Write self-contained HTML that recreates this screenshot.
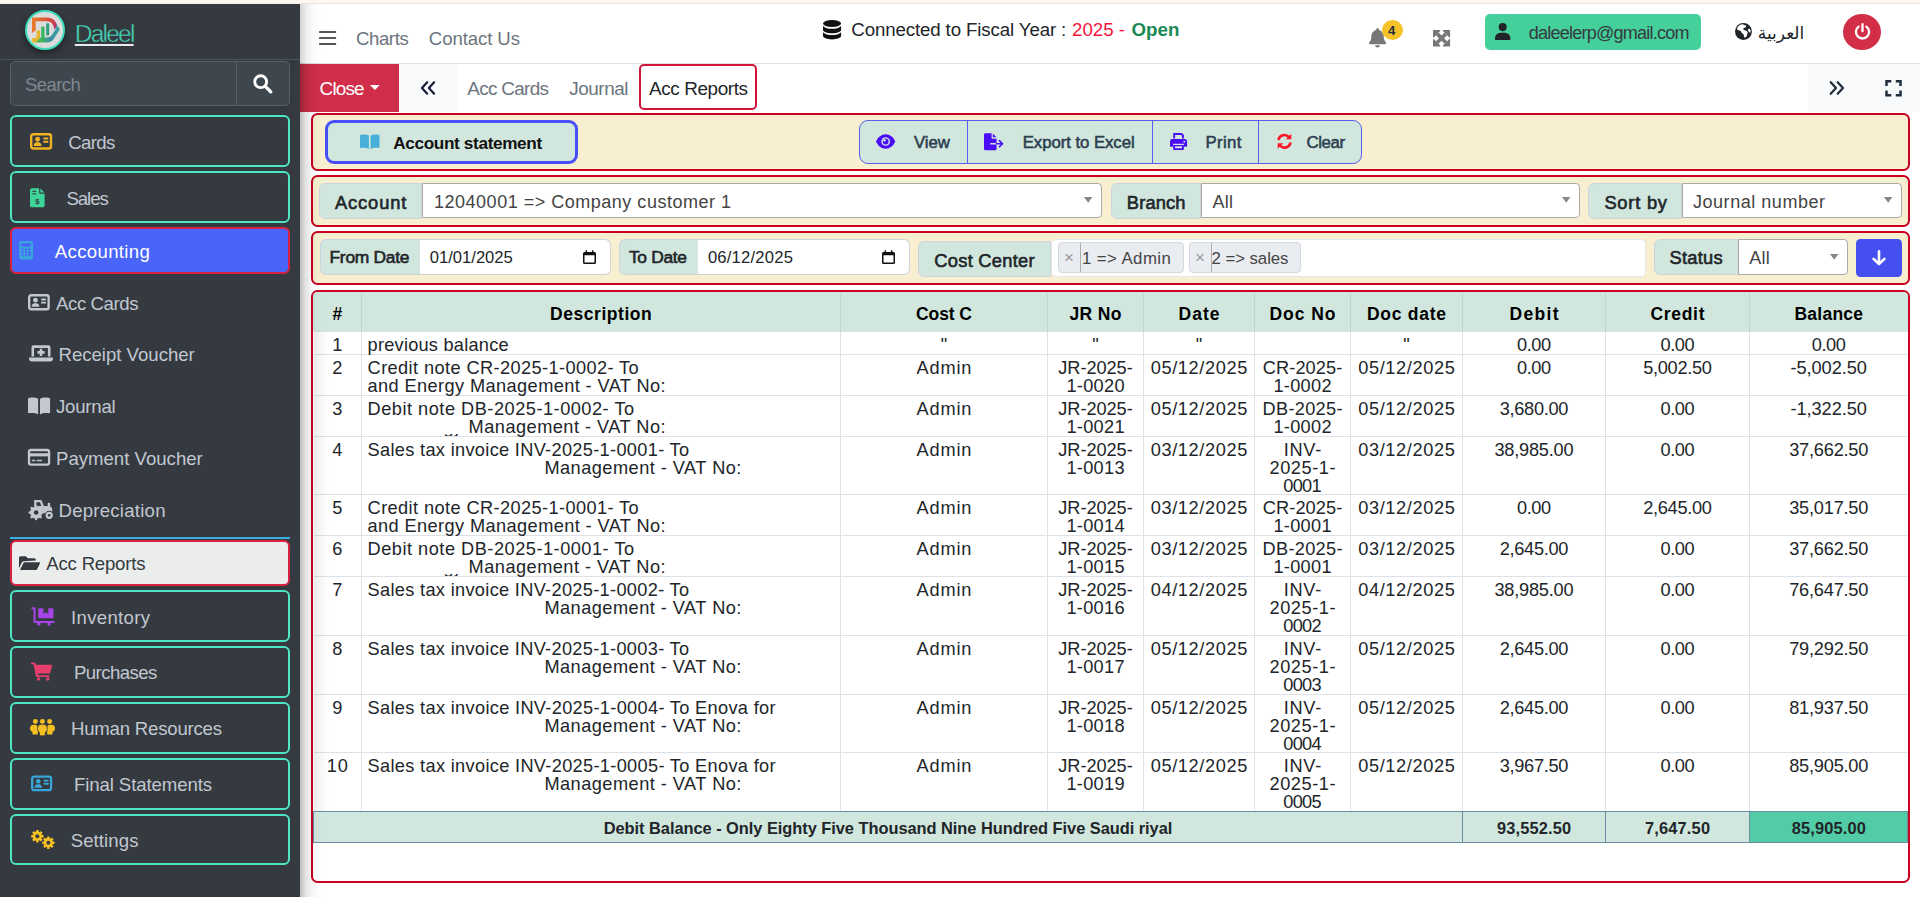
<!DOCTYPE html>
<html lang="en"><head><meta charset="utf-8"><title>Daleel - Acc Reports</title>
<style>
html,body{margin:0;padding:0}
body{width:1920px;height:897px;overflow:hidden;position:relative;background:#fff;font-family:'Liberation Sans','DejaVu Sans',sans-serif;}
.b{position:absolute;box-sizing:border-box}
.t{position:absolute;white-space:pre;line-height:1}
.i{position:absolute;display:block;overflow:visible}
</style></head>
<body>
<div class="b" style="left:0px;top:0px;width:1920px;height:4px;background:#fdf6f1"></div>
<div class="b" style="left:300px;top:3px;width:1620px;height:1px;background:#f3e3d5"></div>
<div class="b" style="left:0px;top:3px;width:300px;height:1px;background:#fbeee2"></div>
<aside>
<div class="b" style="left:0px;top:4px;width:300px;height:893px;background:#343a40"></div>
<div class="b" style="left:0px;top:59px;width:300px;height:1px;background:#4b545c"></div>
<div class="b" style="left:25px;top:10px;width:40px;height:40px;border-radius:50%;background:#dcdcdc;border:2px solid #3fdcbc;box-shadow:0 3px 7px rgba(0,0,0,.45);overflow:hidden"><svg width="40" height="40" viewBox="0 0 40 40" style="position:absolute;left:-2px;top:-2px"><defs><linearGradient id="lg1" gradientUnits="userSpaceOnUse" x1="8" y1="14" x2="32" y2="18"><stop offset="0" stop-color="#e8782c"/><stop offset=".5" stop-color="#dc5a36"/><stop offset=".85" stop-color="#d23a50"/><stop offset="1" stop-color="#8a3aa8"/></linearGradient><linearGradient id="lg2" gradientUnits="userSpaceOnUse" x1="34" y1="20" x2="12" y2="31"><stop offset="0" stop-color="#3aa0a0"/><stop offset=".5" stop-color="#3a8fa6"/><stop offset=".8" stop-color="#3db463"/><stop offset="1" stop-color="#58b84c"/></linearGradient></defs><path d="M7 7.400H22.500C27.500 7.400 31 11 32.300 15.500L29.400 19.700C28.600 14.500 26.500 11.200 22 11.200H10.700V20.200L7 23z" fill="url(#lg1)"/><path d="M31.500 14.800L35 19.300 29.800 27.200C28 30.400 26 32.400 22.500 32.400H10L15.500 27.500H22C24.500 27.500 26 26.500 27.200 24.500L30.500 19.500z" fill="url(#lg2)"/><path d="M7.200 28h4.400v-7.500H15V28l-5 4.400H7.200z" fill="#e6b52c"/><rect x="16.200" y="16.600" width="3.300" height="13" rx=".8" fill="#3db463"/><rect x="21.200" y="13.200" width="2.900" height="12.400" rx=".8" fill="#2f9e7e"/></svg></div>
<span class="t" style="left:74.8px;top:21.8px;font-size:24.6px;letter-spacing:-1.827px;color:#48d6b8;-webkit-text-stroke:.45px #343a40;text-decoration:underline;text-decoration-color:#e9ecef;text-decoration-thickness:2px;text-underline-offset:1.5px">Daleel</span>
<div class="b" style="left:10px;top:61px;width:280px;height:45px;background:#3f474e;border:1px solid #56606a;border-radius:5px"></div>
<div class="b" style="left:236px;top:61px;width:1px;height:45px;background:#56606a"></div>
<span class="t" style="left:25.0px;top:76.2px;font-size:18.4px;letter-spacing:-0.496px;color:#7f8890;">Search</span>
<svg class="i" style="left:253.3px;top:73.6px" width="19.8" height="19.8" viewBox="0 0 18 18" ><circle cx="7" cy="7" r="5.400" fill="none" stroke="#fff" stroke-width="2.600"/><path d="M11.200 11.200l5 5" stroke="#fff" stroke-width="3" stroke-linecap="round"/></svg>
<div class="b" style="left:10px;top:115px;width:280px;height:52px;border:2px solid #4de5c4;border-radius:6px"></div>
<span class="t" style="left:68.2px;top:133.8px;font-size:18.6px;letter-spacing:-0.602px;color:#c2c7d0;">Cards</span>
<svg class="i" style="left:30.4px;top:133.4px" width="22.2" height="16.8" viewBox="0 0 24 18" ><rect x="1.3" y="1.3" width="21.4" height="15.4" rx="2.2" fill="none" stroke="#f0b323" stroke-width="2.6"/><circle cx="8.2" cy="6.7" r="2.6" fill="#f0b323"/><path d="M3.900 14c0-2.500 1.600-4 3.300-4h2c1.700 0 3.300 1.500 3.300 4z" fill="#f0b323"/><rect x="14.400" y="4.900" width="5.400" height="2" rx=".4" fill="#f0b323"/><rect x="14.400" y="8.400" width="5.400" height="2" rx=".4" fill="#f0b323"/></svg>
<div class="b" style="left:10px;top:171px;width:280px;height:52px;border:2px solid #4de5c4;border-radius:6px"></div>
<span class="t" style="left:66.5px;top:189.8px;font-size:18.6px;letter-spacing:-1.079px;color:#c2c7d0;">Sales</span>
<svg class="i" style="left:30.4px;top:187.8px" width="14.6" height="19.5" viewBox="0 0 16 21" ><path d="M2 0h8v5a1 1 0 0 0 1 1h5v13a2 2 0 0 1-2 2H2a2 2 0 0 1-2-2V2a2 2 0 0 1 2-2z" fill="#3dd598"/><path d="M11.3 0.3L15.7 4.7H11.3z" fill="#3dd598"/><rect x="2.6" y="2.9" width="4.2" height="1.2" fill="#343a40"/><rect x="2.6" y="5.6" width="4.2" height="1.2" fill="#343a40"/><text x="8" y="17.2" font-size="8.5" font-weight="700" text-anchor="middle" fill="#343a40" font-family="Liberation Sans,sans-serif">$</text></svg>
<div class="b" style="left:10px;top:227px;width:280px;height:47px;background:#4864f9;border:2px solid #d8223f;border-radius:6px"></div>
<span class="t" style="left:54.8px;top:242.6px;font-size:18.6px;letter-spacing:0.333px;color:#fff;">Accounting</span>
<svg class="i" style="left:18.7px;top:241.4px" width="14.3" height="18.6" viewBox="0 0 14 19" ><rect x="0" y="0" width="14" height="19" rx="1.8" fill="#3aa7dc"/><rect x="2" y="2.3" width="10" height="3.4" rx=".5" fill="#4864f9"/><rect x="2.0" y="7.6" width="2.4" height="1.9" rx=".4" fill="#4864f9"/><rect x="5.6" y="7.6" width="2.4" height="1.9" rx=".4" fill="#4864f9"/><rect x="9.2" y="7.6" width="2.4" height="1.9" rx=".4" fill="#4864f9"/><rect x="2.0" y="10.6" width="2.4" height="1.9" rx=".4" fill="#4864f9"/><rect x="5.6" y="10.6" width="2.4" height="1.9" rx=".4" fill="#4864f9"/><rect x="9.2" y="10.6" width="2.4" height="4.9" rx=".4" fill="#4864f9"/><rect x="2.0" y="13.6" width="2.4" height="1.9" rx=".4" fill="#4864f9"/><rect x="5.6" y="13.6" width="2.4" height="1.9" rx=".4" fill="#4864f9"/></svg>
<span class="t" style="left:56.0px;top:294.8px;font-size:18.6px;letter-spacing:-0.408px;color:#c2c7d0;">Acc Cards</span>
<svg class="i" style="left:28.4px;top:294.4px" width="21.8" height="16.6" viewBox="0 0 24 18" ><rect x="1.3" y="1.3" width="21.4" height="15.4" rx="2.2" fill="none" stroke="#c2c7d0" stroke-width="2.6"/><circle cx="8.2" cy="6.7" r="2.6" fill="#c2c7d0"/><path d="M3.900 14c0-2.500 1.600-4 3.300-4h2c1.700 0 3.300 1.500 3.300 4z" fill="#c2c7d0"/><rect x="14.400" y="4.900" width="5.400" height="2" rx=".4" fill="#c2c7d0"/><rect x="14.400" y="8.400" width="5.400" height="2" rx=".4" fill="#c2c7d0"/></svg>
<span class="t" style="left:58.5px;top:345.8px;font-size:18.6px;letter-spacing:-0.011px;color:#c2c7d0;">Receipt Voucher</span>
<svg class="i" style="left:28.8px;top:345.4px" width="24.0" height="16.6" viewBox="0 0 24 16.500" ><path d="M4.300 .3h15.400a1.800 1.800 0 0 1 1.800 1.800V11.400h-2.600V2.900H5.100v8.500H2.500V2.100A1.800 1.800 0 0 1 4.300.3z" fill="#c2c7d0"/><path d="M.3 12.400h23.400a.3.300 0 0 1 .3.300v.8a3 3 0 0 1-3 3H3a3 3 0 0 1-3-3v-.8a.3.300 0 0 1 .3-.3z" fill="#c2c7d0"/><path d="M10.700 3.700h2.600v2.300h2.300v2.600h-2.300v2.300h-2.600V8.600H8.400V6h2.300z" fill="#c2c7d0"/></svg>
<span class="t" style="left:56.0px;top:397.6px;font-size:18.6px;letter-spacing:-0.214px;color:#c2c7d0;">Journal</span>
<svg class="i" style="left:28.4px;top:396.7px" width="22.1" height="17.6" viewBox="0 0 22.500 17.200" preserveAspectRatio="none"><path d="M1 .9C4 .1 7.600.3 10.300 1.700V17c-2.600-1.300-6-1.600-9.300-1.100-.5.100-1-.2-1-.8V1.900C0 1.400.4 1 1 .9z" fill="#c2c7d0"/><path d="M21.500.9C18.500.1 14.900.3 12.200 1.700V17c2.600-1.300 6-1.600 9.300-1.100.5.100 1-.2 1-.8V1.900c0-.5-.4-.9-1-1z" fill="#c2c7d0"/></svg>
<span class="t" style="left:56.0px;top:450.0px;font-size:18.6px;color:#c2c7d0;">Payment Voucher</span>
<svg class="i" style="left:28.4px;top:449.4px" width="22.1" height="16.6" viewBox="0 0 24 18" ><rect x="1.1" y="1.1" width="21.8" height="15.8" rx="2.2" fill="none" stroke="#c2c7d0" stroke-width="2.5"/><rect x="1" y="4.6" width="22" height="3.4" fill="#c2c7d0"/><rect x="4.2" y="11.6" width="3.6" height="1.8" rx=".4" fill="#c2c7d0"/><rect x="9.200" y="11.6" width="6" height="1.8" rx=".4" fill="#c2c7d0"/></svg>
<span class="t" style="left:58.5px;top:502.0px;font-size:18.6px;letter-spacing:0.237px;color:#c2c7d0;">Depreciation</span>
<svg class="i" style="left:28.1px;top:500.0px" width="25.6" height="19.7" viewBox="-1 0 25.5 20" ><path d="M5 0h6.500a1.500 1.500 0 0 1 1.400 1l1.900 5.200h4V3.600a.8.8 0 0 1 .8-.8h.9a.8.8 0 0 1 .8.8v2.900c1.200.4 2 1.500 2 2.800v4.200h-9V12H9V6.500H5z" fill="#c2c7d0"/><path d="M7.300 2.300h3.600l1.400 3.900h-5z" fill="#343a40"/><circle cx="7" cy="12.800" r="6.200" fill="#c2c7d0"/><circle cx="7" cy="12.800" r="2.300" fill="#343a40"/><circle cx="20.300" cy="15.600" r="4.600" fill="#343a40"/><circle cx="20.300" cy="15.600" r="3.700" fill="#c2c7d0"/><circle cx="20.300" cy="15.600" r="1.300" fill="#343a40"/><circle cx="13.50" cy="12.80" r="1.25" fill="#c2c7d0"/><circle cx="11.60" cy="17.40" r="1.25" fill="#c2c7d0"/><circle cx="7.00" cy="19.30" r="1.25" fill="#c2c7d0"/><circle cx="2.40" cy="17.40" r="1.25" fill="#c2c7d0"/><circle cx="0.50" cy="12.80" r="1.25" fill="#c2c7d0"/><circle cx="2.40" cy="8.20" r="1.25" fill="#c2c7d0"/><circle cx="7.00" cy="6.30" r="1.25" fill="#c2c7d0"/><circle cx="11.60" cy="8.20" r="1.25" fill="#c2c7d0"/></svg>
<div class="b" style="left:10px;top:537px;width:280px;height:2px;background:#3aaee0"></div>
<div class="b" style="left:10px;top:539.5px;width:280px;height:46px;background:#ebeded;border:2px solid #d8223f;border-radius:6px"></div>
<span class="t" style="left:46.3px;top:554.8px;font-size:18.6px;letter-spacing:-0.208px;color:#343a40;">Acc Reports</span>
<svg class="i" style="left:18.7px;top:554.8px" width="21.3" height="16.2" viewBox="0 0 24 16" ><path d="M19 5.200V4.300a1.800 1.800 0 0 0-1.800-1.800H10L7.700.2H1.800A1.800 1.800 0 0 0 0 2v11.800l3.300-6.700c.4-.8 1.200-1.300 2.100-1.300z" fill="#343a40"/><path d="M5.400 7.100h17.400c.7 0 1.200.8.800 1.400l-3.200 6.300a2 2 0 0 1-1.800 1.100H1.100z" fill="#343a40"/></svg>
<div class="b" style="left:10px;top:590px;width:280px;height:52px;border:2px solid #4de5c4;border-radius:6px"></div>
<span class="t" style="left:71.0px;top:608.8px;font-size:18.6px;letter-spacing:0.314px;color:#c2c7d0;">Inventory</span>
<svg class="i" style="left:31.0px;top:607.0px" width="23.8" height="19.0" viewBox="0 0 24 19.500" ><path d="M1.100 1.300H3.400V15.300H23" fill="none" stroke="#a643e8" stroke-width="2.100" stroke-linecap="round" stroke-linejoin="round"/><path d="M8.200 1.200h4.300v5.600l2.500-1.500 2.500 1.500V1.200h4.300a1 1 0 0 1 1 1v8.400a1 1 0 0 1-1 1H8.200a1 1 0 0 1-1-1V2.200a1 1 0 0 1 1-1z" fill="#a643e8"/><circle cx="7.700" cy="17.500" r="1.750" fill="#a643e8"/><circle cx="18.300" cy="17.500" r="1.750" fill="#a643e8"/></svg>
<div class="b" style="left:10px;top:646px;width:280px;height:52px;border:2px solid #4de5c4;border-radius:6px"></div>
<span class="t" style="left:74.0px;top:663.8px;font-size:18.6px;letter-spacing:-0.582px;color:#c2c7d0;">Purchases</span>
<svg class="i" style="left:31.0px;top:662.0px" width="21.2" height="19.3" viewBox="0 0 22.5 19.700" ><path d="M0 .2h3.700a1 1 0 0 1 1 .8l.3 1.600h16.400c.6 0 1.100.6.900 1.200l-1.800 7.300a1 1 0 0 1-.9.700H7.300l.4 2h11a.9.9 0 0 1 0 1.800H6.200a1 1 0 0 1-1-.8L2.600 2H0z" fill="#e83e6c"/><circle cx="8" cy="17.700" r="1.800" fill="#e83e6c"/><circle cx="17.800" cy="17.700" r="1.800" fill="#e83e6c"/></svg>
<div class="b" style="left:10px;top:702px;width:280px;height:52px;border:2px solid #4de5c4;border-radius:6px"></div>
<span class="t" style="left:71.0px;top:719.8px;font-size:18.6px;letter-spacing:-0.213px;color:#c2c7d0;">Human Resources</span>
<svg class="i" style="left:30.0px;top:719.4px" width="25.2" height="17.1" viewBox="0 0 25 17" ><circle cx="5.3" cy="2.4" r="2.45" fill="#f5c021"/><circle cx="12.3" cy="2.4" r="2.45" fill="#f5c021"/><circle cx="19.5" cy="2.4" r="2.45" fill="#f5c021"/><rect x="0" y="5.600" width="8" height="7.200" rx="3.500" fill="#f5c021"/><rect x="2.400" y="9.500" width="5.400" height="5.900" rx=".9" fill="#f5c021"/><rect x="16.800" y="5.600" width="8" height="7.200" rx="3.500" fill="#f5c021"/><rect x="17" y="9.500" width="5.400" height="5.900" rx=".9" fill="#f5c021"/><path d="M11.300 5.200h2c2.300 0 3.900 1.700 3.900 4.100 0 2-.8 3.400-2 4.100v2.300a1 1 0 0 1-1 1H10.400a1 1 0 0 1-1-1v-2.300c-1.200-.7-2-2.100-2-4.100 0-2.400 1.600-4.100 3.900-4.100z" fill="#f5c021" stroke="#343a40" stroke-width=".8"/></svg>
<div class="b" style="left:10px;top:758px;width:280px;height:52px;border:2px solid #4de5c4;border-radius:6px"></div>
<span class="t" style="left:74.0px;top:775.8px;font-size:18.6px;letter-spacing:-0.102px;color:#c2c7d0;">Final Statements</span>
<svg class="i" style="left:31.0px;top:775.4px" width="21.2" height="16.8" viewBox="0 0 24 18" ><rect x="1.3" y="1.3" width="21.4" height="15.4" rx="2.2" fill="none" stroke="#3aa5d8" stroke-width="2.6"/><circle cx="8.2" cy="6.7" r="2.6" fill="#3aa5d8"/><path d="M3.900 14c0-2.500 1.600-4 3.300-4h2c1.700 0 3.300 1.500 3.300 4z" fill="#3aa5d8"/><rect x="14.400" y="4.900" width="5.400" height="2" rx=".4" fill="#3aa5d8"/><rect x="14.400" y="8.400" width="5.400" height="2" rx=".4" fill="#3aa5d8"/></svg>
<div class="b" style="left:10px;top:813.5px;width:280px;height:51.5px;border:2px solid #4de5c4;border-radius:6px"></div>
<span class="t" style="left:70.7px;top:831.6px;font-size:18.6px;letter-spacing:0.087px;color:#c2c7d0;">Settings</span>
<svg class="i" style="left:30.6px;top:830.3px" width="24.1" height="19.0" viewBox="0 0 24 19" ><rect x="-1.27" y="-6.20" width="2.54" height="2.82" rx="0.38" fill="#f5c021" transform="translate(6.3,6.3) rotate(0)"/><rect x="-1.27" y="-6.20" width="2.54" height="2.82" rx="0.38" fill="#f5c021" transform="translate(6.3,6.3) rotate(45)"/><rect x="-1.27" y="-6.20" width="2.54" height="2.82" rx="0.38" fill="#f5c021" transform="translate(6.3,6.3) rotate(90)"/><rect x="-1.27" y="-6.20" width="2.54" height="2.82" rx="0.38" fill="#f5c021" transform="translate(6.3,6.3) rotate(135)"/><rect x="-1.27" y="-6.20" width="2.54" height="2.82" rx="0.38" fill="#f5c021" transform="translate(6.3,6.3) rotate(180)"/><rect x="-1.27" y="-6.20" width="2.54" height="2.82" rx="0.38" fill="#f5c021" transform="translate(6.3,6.3) rotate(225)"/><rect x="-1.27" y="-6.20" width="2.54" height="2.82" rx="0.38" fill="#f5c021" transform="translate(6.3,6.3) rotate(270)"/><rect x="-1.27" y="-6.20" width="2.54" height="2.82" rx="0.38" fill="#f5c021" transform="translate(6.3,6.3) rotate(315)"/><circle cx="6.3" cy="6.3" r="4.7" fill="#f5c021"/><circle cx="6.3" cy="6.3" r="1.97" fill="#343a40"/><rect x="-1.27" y="-6.20" width="2.54" height="2.82" rx="0.38" fill="#f5c021" transform="translate(17.3,12.8) rotate(0)"/><rect x="-1.27" y="-6.20" width="2.54" height="2.82" rx="0.38" fill="#f5c021" transform="translate(17.3,12.8) rotate(45)"/><rect x="-1.27" y="-6.20" width="2.54" height="2.82" rx="0.38" fill="#f5c021" transform="translate(17.3,12.8) rotate(90)"/><rect x="-1.27" y="-6.20" width="2.54" height="2.82" rx="0.38" fill="#f5c021" transform="translate(17.3,12.8) rotate(135)"/><rect x="-1.27" y="-6.20" width="2.54" height="2.82" rx="0.38" fill="#f5c021" transform="translate(17.3,12.8) rotate(180)"/><rect x="-1.27" y="-6.20" width="2.54" height="2.82" rx="0.38" fill="#f5c021" transform="translate(17.3,12.8) rotate(225)"/><rect x="-1.27" y="-6.20" width="2.54" height="2.82" rx="0.38" fill="#f5c021" transform="translate(17.3,12.8) rotate(270)"/><rect x="-1.27" y="-6.20" width="2.54" height="2.82" rx="0.38" fill="#f5c021" transform="translate(17.3,12.8) rotate(315)"/><circle cx="17.3" cy="12.8" r="4.7" fill="#f5c021"/><circle cx="17.3" cy="12.8" r="1.97" fill="#343a40"/></svg>
</aside>
<header>
<div class="b" style="left:300px;top:4px;width:1620px;height:59px;background:#fff"></div>
<div class="b" style="left:300px;top:63px;width:1620px;height:1px;background:#dee2e6"></div>
<svg class="i" style="left:319.0px;top:31.0px" width="17.2" height="14.0" viewBox="0 0 16 13.4" preserveAspectRatio="none"><rect x="0" y="0" width="16" height="2" rx=".8" fill="#555"/><rect x="0" y="5.7" width="16" height="2" rx=".8" fill="#555"/><rect x="0" y="11.4" width="16" height="2" rx=".8" fill="#555"/></svg>
<span class="t" style="left:356.0px;top:29.6px;font-size:18.6px;letter-spacing:-0.413px;color:#6c757d;">Charts</span>
<span class="t" style="left:428.8px;top:29.6px;font-size:18.6px;letter-spacing:-0.087px;color:#6c757d;">Contact Us</span>
<svg class="i" style="left:823.3px;top:19.5px" width="18.1" height="19.4" viewBox="0 0 18 17.5" preserveAspectRatio="none"><ellipse cx="9" cy="3.2" rx="9" ry="3.2" fill="#111"/><path d="M0 5.400c1.800 1.800 5.200 2.600 9 2.600s7.200-.8 9-2.600v3.300c0 1.800-4 3.200-9 3.200S0 10.500 0 8.700z" fill="#111"/><path d="M0 11c1.800 1.800 5.200 2.600 9 2.600s7.200-.8 9-2.600v3.300c0 1.800-4 3.200-9 3.200S0 16.100 0 14.300z" fill="#111"/></svg>
<span class="t" style="left:851.3px;top:20.8px;font-size:18.7px;letter-spacing:-0.126px;color:#212529;">Connected to Fiscal Year :</span>
<span class="t" style="left:1072.0px;top:20.8px;font-size:18.7px;color:#f5143c;">2025 -</span>
<span class="t" style="left:1131.5px;top:20.8px;font-size:18.7px;font-weight:700;letter-spacing:0.078px;color:#198754;">Open</span>
<svg class="i" style="left:1369.2px;top:27.9px" width="17.1" height="19.6" viewBox="0 0 16 18.4" preserveAspectRatio="none"><path d="M8 0a1.150 1.150 0 0 1 1.150 1.150v.7c2.600.55 4.600 2.900 4.600 5.700 0 3.400 1 4.900 2 5.900.2.2.250.5.250.7 0 .6-.450 1.150-1.150 1.150H1.150C.450 15.300 0 14.750 0 14.150c0-.250.100-.5.250-.7 1-1 2-2.500 2-5.900 0-2.800 2-5.150 4.600-5.700v-.7A1.150 1.150 0 0 1 8 0z" fill="#777"/><path d="M8 18.400a2.300 2.300 0 0 0 2.300-2.300H5.700A2.300 2.300 0 0 0 8 18.400z" fill="#777"/></svg>
<div class="b" style="left:1381.5px;top:19.8px;width:21.2px;height:20.2px;background:#f5c328;border-radius:50%"></div>
<span class="t" style="left:1388.1px;top:23.8px;font-size:13.2px;font-weight:700;color:#1f2d3d;">4</span>
<svg class="i" style="left:1432.9px;top:29.6px" width="17.1" height="16.4" viewBox="0 0 18 17" preserveAspectRatio="none"><path d="M.6 0h6.400c.7 0 .9.7.5 1.100L1.100 7.500C.7 7.900 0 7.700 0 7V.6A.6.6 0 0 1 .6 0z" fill="#777"/><path d="M.6 0h6.400c.7 0 .9.7.5 1.100L1.100 7.500C.7 7.900 0 7.700 0 7V.6A.6.6 0 0 1 .6 0z" fill="#777" transform="translate(18,0) scale(-1,1)"/><path d="M.6 0h6.400c.7 0 .9.7.5 1.100L1.100 7.500C.7 7.900 0 7.700 0 7V.6A.6.6 0 0 1 .6 0z" fill="#777" transform="translate(0,17) scale(1,-1)"/><path d="M.6 0h6.400c.7 0 .9.7.5 1.100L1.100 7.500C.7 7.900 0 7.700 0 7V.6A.6.6 0 0 1 .6 0z" fill="#777" transform="translate(18,17) scale(-1,-1)"/><path d="M4.500 4L13.500 13M13.500 4L4.500 13" stroke="#777" stroke-width="3.8"/></svg>
<div class="b" style="left:1485px;top:14px;width:216px;height:36px;background:#45cf9a;border-radius:5px"></div>
<svg class="i" style="left:1495.0px;top:22.9px" width="15.4" height="17.1" viewBox="0 0 16 17.500" preserveAspectRatio="none"><circle cx="8" cy="4.200" r="4.200" fill="#212529"/><path d="M0 17.500v-1.800a5.800 5.800 0 0 1 5.800-5.800h4.400a5.800 5.800 0 0 1 5.800 5.800v1.800z" fill="#212529"/></svg>
<span class="t" style="left:1528.8px;top:23.9px;font-size:18px;letter-spacing:-0.759px;color:#343a40;">daleelerp@gmail.com</span>
<svg class="i" style="left:1735.0px;top:23.0px" width="16.9" height="16.9" viewBox="0 0 16 16" ><circle cx="8" cy="8" r="8" fill="#212529"/><path d="M6.800 1.300c1.200-.2 1.800.7 2.800.9.900.2 1.300 1.100.600 1.800-.6.600-1.800.4-2.300 1.300-.4.800.5 1.400 1.400 1.500 1.300.1 2.300.9 2.600 2 .3 1.200-.5 2-.8 3-.3.900-.3 1.800-1.300 2-.9.100-1.300-.9-1.400-1.800-.1-1-.8-1.600-1.500-2.200C5.800 9 5.900 7.900 5 7.300 4 6.700 2.600 7 2.100 5.900c-.3-.8.100-1.700.7-2.400 1-1.200 2.500-2 4-2.200z" fill="#fff"/><path d="M13.400 5.500c.8.200 1.300 1.100 1.400 2 .1.800-.1 1.600-.9 1.500-.8-.1-1-1-1.400-1.600-.4-.7-.1-2.100.9-1.900z" fill="#fff"/></svg>
<span class="t" style="left:1757.8px;top:24.7px;font-size:17px;color:#212529;">العربية</span>
<div class="b" style="left:1843px;top:13.8px;width:38.2px;height:36.2px;background:#d22e48;border-radius:50%"></div>
<svg class="i" style="left:1854.0px;top:22.8px" width="17.0" height="17.0" viewBox="0 0 17 17" ><path d="M4.600 3.600A6.600 6.600 0 1 0 12.400 3.600" fill="none" stroke="#fff" stroke-width="2.300" stroke-linecap="round"/><path d="M8.500 1.200v7" stroke="#fff" stroke-width="2.300" stroke-linecap="round"/></svg>
</header>
<nav>
<div class="b" style="left:300px;top:64px;width:1620px;height:48px;background:#fff"></div>
<div class="b" style="left:300px;top:64px;width:99px;height:48px;background:#d02e4a"></div>
<span class="t" style="left:319.6px;top:79.5px;font-size:18.9px;letter-spacing:-0.824px;color:#fff;">Close</span>
<svg class="i" style="left:370.2px;top:85.0px" width="9.8" height="5.0" viewBox="0 0 8 5" preserveAspectRatio="none"><path d="M0 0h8L4 5z" fill="#fff"/></svg>
<div class="b" style="left:399px;top:64px;width:58px;height:48px;background:#f8f9fa"></div>
<svg class="i" style="left:419.6px;top:81.1px" width="15.8" height="13.9" viewBox="0 0 16 14" ><path d="M7.300 1.200L2 7l5.300 5.800M14.300 1.200L9 7l5.300 5.800" fill="none" stroke="#141e37" stroke-width="2.200" stroke-linecap="round" stroke-linejoin="round"/></svg>
<span class="t" style="left:467.3px;top:79.5px;font-size:18.9px;letter-spacing:-0.680px;color:#6c757d;">Acc Cards</span>
<span class="t" style="left:569.3px;top:79.5px;font-size:18.9px;letter-spacing:-0.461px;color:#6c757d;">Journal</span>
<div class="b" style="left:639px;top:64px;width:118.3px;height:46px;border:2px solid #d0143a;border-radius:5px;background:#fff"></div>
<span class="t" style="left:649.0px;top:79.5px;font-size:18.9px;letter-spacing:-0.389px;color:#212529;">Acc Reports</span>
<div class="b" style="left:1808px;top:64px;width:112px;height:48px;background:#f8f9fa"></div>
<svg class="i" style="transform:scaleX(-1);left:1829.4px;top:81.0px" width="16.0" height="14.0" viewBox="0 0 16 14" ><path d="M7.300 1.200L2 7l5.300 5.800M14.300 1.200L9 7l5.300 5.800" fill="none" stroke="#1f2d3d" stroke-width="2.200" stroke-linecap="round" stroke-linejoin="round"/></svg>
<svg class="i" style="left:1884.7px;top:80.0px" width="17.0" height="16.5" viewBox="0 0 16 16" ><path d="M1.200 5.800V1.200h4.600M10.200 1.200h4.600v4.600M14.800 10.200v4.600h-4.600M5.800 14.800H1.200v-4.600" fill="none" stroke="#1f2d3d" stroke-width="2.400"/></svg>
</nav>
<main>
<div class="b" style="left:311px;top:113px;width:1599px;height:58px;background:#f8eed0;border:2px solid #c90020;border-radius:6.5px"></div>
<div class="b" style="left:311px;top:175px;width:1599px;height:52px;background:#f8eed0;border:2px solid #c90020;border-radius:6.5px"></div>
<div class="b" style="left:311px;top:231px;width:1599px;height:54px;background:#f8eed0;border:2px solid #c90020;border-radius:6.5px"></div>
<div class="b" style="left:311px;top:290px;width:1599px;height:593px;background:#fff;border:2px solid #c90020;border-radius:6.5px"></div>
<div class="b" style="left:325px;top:120px;width:253px;height:44px;background:#d1e7dd;border:3px solid #4750f8;border-radius:9px"></div>
<svg class="i" style="left:360.0px;top:133.9px" width="19.5" height="15.2" viewBox="0 0 22.500 17.200" preserveAspectRatio="none"><path d="M1 .9C4 .1 7.600.3 10.300 1.700V17c-2.600-1.300-6-1.600-9.300-1.100-.5.100-1-.2-1-.8V1.900C0 1.400.4 1 1 .9z" fill="#48b0d8"/><path d="M21.500.9C18.500.1 14.900.3 12.200 1.700V17c2.600-1.300 6-1.600 9.300-1.100.5.100 1-.2 1-.8V1.900c0-.5-.4-.9-1-1z" fill="#48b0d8"/></svg>
<span class="t" style="left:393.2px;top:134.6px;font-size:17.2px;font-weight:700;letter-spacing:-0.357px;color:#111;">Account statement</span>
<div class="b" style="left:859px;top:120px;width:502.5px;height:43.5px;background:#d1e7dd;border:1px solid #5a5df0;border-radius:9px"></div>
<div class="b" style="left:966.5px;top:120px;width:1px;height:43.5px;background:#5a5df0"></div>
<div class="b" style="left:1151.5px;top:120px;width:1px;height:43.5px;background:#5a5df0"></div>
<div class="b" style="left:1257.5px;top:120px;width:1px;height:43.5px;background:#5a5df0"></div>
<svg class="i" style="left:876.0px;top:134.0px" width="19.3" height="15.0" viewBox="0 0 20 15" ><path d="M0 7.500C2 3 5.600 0 10 0s8 3 10 7.500C18 12 14.400 15 10 15S2 12 0 7.500z" fill="#4a0df5"/><circle cx="10" cy="7.500" r="4.500" fill="#d1e7dd"/><circle cx="10" cy="7.500" r="3" fill="#4a0df5"/><circle cx="8.800" cy="6.300" r="1.300" fill="#d1e7dd"/></svg>
<span class="t" style="left:914.0px;top:135.1px;font-size:16.8px;letter-spacing:-0.026px;color:#2c3e50;-webkit-text-stroke:.55px #2c3e50">View</span>
<svg class="i" style="left:984.3px;top:133.0px" width="19.3" height="17.5" viewBox="0 0 20.300 18" ><path d="M1.500 0H8v4.800a1 1 0 0 0 1 1h4.200v4.400H7.300a.9.900 0 0 0 0 1.800h5.900v4.500a1.500 1.500 0 0 1-1.500 1.500H1.500A1.500 1.500 0 0 1 0 16.500v-15A1.500 1.500 0 0 1 1.500 0z" fill="#4a0df5"/><path d="M9.300 0.200L13 4.200H9.300z" fill="#4a0df5"/><path d="M13.200 11.100h5.800M16.200 7.900l3.300 3.200-3.300 3.200" fill="none" stroke="#4a0df5" stroke-width="1.700" stroke-linecap="round" stroke-linejoin="round"/></svg>
<span class="t" style="left:1022.7px;top:135.1px;font-size:16.8px;letter-spacing:-0.061px;color:#2c3e50;-webkit-text-stroke:.55px #2c3e50">Export to Excel</span>
<svg class="i" style="left:1169.9px;top:132.8px" width="17.1" height="17.0" viewBox="0 0 17 16.800" ><path d="M3.200 0h8.600l2 2v3.500h-1.900V2.800L11 1.900H5.100v3.600H3.200z" fill="#4a0df5"/><path d="M2.300 6h12.400A2.300 2.300 0 0 1 17 8.300v4.500a.7.700 0 0 1-.7.700h-2.500v-2.800H3.200v2.800H.7a.7.700 0 0 1-.7-.7V8.300A2.300 2.300 0 0 1 2.300 6z" fill="#4a0df5"/><path d="M3.200 11.800h10.600V16a.8.800 0 0 1-.8.800H4a.8.800 0 0 1-.8-.8z M5.100 13.200v1.800h6.800v-1.800z" fill="#4a0df5" fill-rule="evenodd"/><circle cx="14.200" cy="8.600" r=".9" fill="#d1e7dd"/></svg>
<span class="t" style="left:1205.5px;top:135.1px;font-size:16.8px;letter-spacing:0.371px;color:#2c3e50;-webkit-text-stroke:.55px #2c3e50">Print</span>
<svg class="i" style="left:1275.5px;top:133.3px" width="17.0" height="16.6" viewBox="0 0 17 17" ><path d="M2.300 7.200A6.200 6.200 0 0 1 13.100 4.200" fill="none" stroke="#ff1428" stroke-width="2.700"/><path d="M15.500 .8v5.700H9.800z" fill="#ff1428"/><path d="M14.700 9.800A6.200 6.200 0 0 1 3.900 12.800" fill="none" stroke="#ff1428" stroke-width="2.700"/><path d="M1.500 16.200v-5.700h5.700z" fill="#ff1428"/></svg>
<span class="t" style="left:1306.5px;top:135.1px;font-size:16.8px;letter-spacing:-0.402px;color:#2c3e50;-webkit-text-stroke:.55px #2c3e50">Clear</span>
<div class="b" style="left:319px;top:183px;width:103.3px;height:36px;background:#d1e7dd;border:1px solid #cdd4de;border-radius:6px 0 0 6px"></div>
<span class="t" style="left:335.0px;top:194.1px;font-size:18.3px;letter-spacing:0.873px;color:#212529;-webkit-text-stroke:.6px #212529">Account</span>
<div class="b" style="left:422px;top:183.2px;width:679.5px;height:35.3px;background:#fff;border:1px solid #aaa;border-radius:0 4px 4px 0"></div>
<span class="t" style="left:434.0px;top:193.0px;font-size:18px;letter-spacing:0.511px;color:#444;">12040001 =&gt; Company customer 1</span>
<svg class="i" style="left:1083.5px;top:197.4px" width="8.4" height="5.8" viewBox="0 0 8 5" preserveAspectRatio="none"><path d="M0 0h8L4 5z" fill="#888"/></svg>
<div class="b" style="left:1111px;top:183px;width:90px;height:36px;background:#d1e7dd;border:1px solid #cdd4de;border-radius:6px 0 0 6px"></div>
<span class="t" style="left:1126.8px;top:194.1px;font-size:18.3px;letter-spacing:0.153px;color:#212529;-webkit-text-stroke:.6px #212529">Branch</span>
<div class="b" style="left:1200.5px;top:183.2px;width:379px;height:35.3px;background:#fff;border:1px solid #aaa;border-radius:0 4px 4px 0"></div>
<span class="t" style="left:1212.5px;top:193.0px;font-size:18px;letter-spacing:0.242px;color:#444;">All</span>
<svg class="i" style="left:1561.5px;top:197.4px" width="8.4" height="5.8" viewBox="0 0 8 5" preserveAspectRatio="none"><path d="M0 0h8L4 5z" fill="#888"/></svg>
<div class="b" style="left:1587.8px;top:183px;width:94.7px;height:36px;background:#d1e7dd;border:1px solid #cdd4de;border-radius:6px 0 0 6px"></div>
<span class="t" style="left:1604.4px;top:194.1px;font-size:18.3px;letter-spacing:0.780px;color:#212529;-webkit-text-stroke:.6px #212529">Sort by</span>
<div class="b" style="left:1682px;top:183.2px;width:219.5px;height:35.3px;background:#fff;border:1px solid #aaa;border-radius:0 4px 4px 0"></div>
<span class="t" style="left:1693.0px;top:193.0px;font-size:18px;letter-spacing:0.532px;color:#444;">Journal number</span>
<svg class="i" style="left:1883.5px;top:197.4px" width="8.4" height="5.8" viewBox="0 0 8 5" preserveAspectRatio="none"><path d="M0 0h8L4 5z" fill="#888"/></svg>
<div class="b" style="left:319.5px;top:239px;width:100px;height:36px;background:#d1e7dd;border:1px solid #cdd4de;border-right:0;border-radius:6px 0 0 6px"></div>
<span class="t" style="left:329.5px;top:248.8px;font-size:17.4px;letter-spacing:-0.268px;color:#212529;-webkit-text-stroke:.6px #212529">From Date</span>
<div class="b" style="left:419.5px;top:239px;width:191px;height:36px;background:#fff;border:1px solid #cdd4de;border-left:0;border-radius:0 6px 6px 0"></div>
<span class="t" style="left:429.8px;top:250.1px;font-size:16.6px;letter-spacing:-0.007px;color:#212529;">01/01/2025</span>
<svg class="i" style="left:583.0px;top:249.5px" width="13.0" height="14.0" viewBox="0 0 13 14" ><path d="M1.500 2h10A1.500 1.500 0 0 1 13 3.500v9a1.500 1.500 0 0 1-1.500 1.500h-10A1.500 1.500 0 0 1 0 12.500v-9A1.500 1.500 0 0 1 1.500 2zM1.500 5.200v7.300h10V5.200z" fill="#111" fill-rule="evenodd"/><rect x="2.600" y=".3" width="1.500" height="2.500" fill="#111"/><rect x="8.900" y=".3" width="1.500" height="2.500" fill="#111"/></svg>
<div class="b" style="left:619px;top:239px;width:78.5px;height:36px;background:#d1e7dd;border:1px solid #cdd4de;border-right:0;border-radius:6px 0 0 6px"></div>
<span class="t" style="left:629.0px;top:248.8px;font-size:17.4px;letter-spacing:-0.323px;color:#212529;-webkit-text-stroke:.6px #212529">To Date</span>
<div class="b" style="left:697.5px;top:239px;width:212px;height:36px;background:#fff;border:1px solid #cdd4de;border-left:0;border-radius:0 6px 6px 0"></div>
<span class="t" style="left:707.9px;top:250.1px;font-size:16.6px;letter-spacing:0.215px;color:#212529;">06/12/2025</span>
<svg class="i" style="left:881.8px;top:249.5px" width="13.0" height="14.0" viewBox="0 0 13 14" ><path d="M1.500 2h10A1.500 1.500 0 0 1 13 3.500v9a1.500 1.500 0 0 1-1.500 1.500h-10A1.500 1.500 0 0 1 0 12.500v-9A1.500 1.500 0 0 1 1.500 2zM1.500 5.200v7.300h10V5.200z" fill="#111" fill-rule="evenodd"/><rect x="2.600" y=".3" width="1.500" height="2.500" fill="#111"/><rect x="8.900" y=".3" width="1.500" height="2.500" fill="#111"/></svg>
<div class="b" style="left:918.3px;top:241px;width:132.5px;height:35.6px;background:#d1e7dd;border:1px solid #cdd4de;border-radius:6px 0 0 6px"></div>
<span class="t" style="left:934.3px;top:251.7px;font-size:18.3px;letter-spacing:0.275px;color:#212529;-webkit-text-stroke:.6px #212529">Cost Center</span>
<div class="b" style="left:1050.5px;top:239.3px;width:595px;height:37.3px;background:#fff;border:1px solid #e3e6ea;border-radius:5px"></div>
<div class="b" style="left:1057.5px;top:242.2px;width:126px;height:30.6px;background:#e9ecf1;border:1px solid #d5d9de;border-radius:4px"></div>
<div class="b" style="left:1079.5px;top:243px;width:1px;height:29px;background:#b0b0b0"></div>
<span class="t" style="left:1064.0px;top:248.8px;font-size:17px;color:#999;">×</span>
<span class="t" style="left:1082.0px;top:250.5px;font-size:16.8px;letter-spacing:0.433px;color:#444;">1 =&gt; Admin</span>
<div class="b" style="left:1188.5px;top:242.2px;width:112.5px;height:30.6px;background:#e9ecf1;border:1px solid #d5d9de;border-radius:4px"></div>
<div class="b" style="left:1210.5px;top:243px;width:1px;height:29px;background:#b0b0b0"></div>
<span class="t" style="left:1195.0px;top:248.8px;font-size:17px;color:#999;">×</span>
<span class="t" style="left:1211.5px;top:250.5px;font-size:16.8px;letter-spacing:-0.049px;color:#444;">2 =&gt; sales</span>
<div class="b" style="left:1654px;top:239px;width:84.5px;height:36px;background:#d1e7dd;border:1px solid #cdd4de;border-radius:6px 0 0 6px"></div>
<span class="t" style="left:1669.6px;top:249.0px;font-size:18.3px;letter-spacing:0.234px;color:#212529;-webkit-text-stroke:.6px #212529">Status</span>
<div class="b" style="left:1738px;top:239.29999999999998px;width:109.5px;height:35.3px;background:#fff;border:1px solid #aaa;border-radius:0 4px 4px 0"></div>
<span class="t" style="left:1749.2px;top:249.0px;font-size:18px;letter-spacing:0.242px;color:#444;">All</span>
<svg class="i" style="left:1829.5px;top:253.5px" width="8.4" height="5.8" viewBox="0 0 8 5" preserveAspectRatio="none"><path d="M0 0h8L4 5z" fill="#888"/></svg>
<div class="b" style="left:1856px;top:239px;width:46px;height:37.8px;background:#4650f0;border-radius:4.5px"></div>
<svg class="i" style="left:1872.0px;top:250.0px" width="14.0" height="16.0" viewBox="0 0 14 16" ><path d="M7 1.200v12.500M1.600 8.800L7 14.200l5.400-5.400" fill="none" stroke="#fff" stroke-width="2.600" stroke-linecap="round" stroke-linejoin="round"/></svg>
<div class="b" style="left:313px;top:292px;width:1595px;height:39px;background:#d1e7dd;border-radius:4.5px 4.5px 0 0"></div>
<div class="b" style="left:313.5px;top:331px;width:1594.5px;height:1px;background:#dee2e6"></div>
<div class="b" style="left:313.5px;top:354px;width:1594.5px;height:1px;background:#dee2e6"></div>
<div class="b" style="left:313.5px;top:395px;width:1594.5px;height:1px;background:#dee2e6"></div>
<div class="b" style="left:313.5px;top:436px;width:1594.5px;height:1px;background:#dee2e6"></div>
<div class="b" style="left:313.5px;top:494px;width:1594.5px;height:1px;background:#dee2e6"></div>
<div class="b" style="left:313.5px;top:535px;width:1594.5px;height:1px;background:#dee2e6"></div>
<div class="b" style="left:313.5px;top:576px;width:1594.5px;height:1px;background:#dee2e6"></div>
<div class="b" style="left:313.5px;top:635px;width:1594.5px;height:1px;background:#dee2e6"></div>
<div class="b" style="left:313.5px;top:694px;width:1594.5px;height:1px;background:#dee2e6"></div>
<div class="b" style="left:313.5px;top:752px;width:1594.5px;height:1px;background:#dee2e6"></div>
<div class="b" style="left:361px;top:293px;width:1px;height:518px;background:#dee2e6"></div>
<div class="b" style="left:361px;top:293px;width:1px;height:38px;background:#c0d6cc"></div>
<div class="b" style="left:840px;top:293px;width:1px;height:518px;background:#dee2e6"></div>
<div class="b" style="left:840px;top:293px;width:1px;height:38px;background:#c0d6cc"></div>
<div class="b" style="left:1047px;top:293px;width:1px;height:518px;background:#dee2e6"></div>
<div class="b" style="left:1047px;top:293px;width:1px;height:38px;background:#c0d6cc"></div>
<div class="b" style="left:1143px;top:293px;width:1px;height:518px;background:#dee2e6"></div>
<div class="b" style="left:1143px;top:293px;width:1px;height:38px;background:#c0d6cc"></div>
<div class="b" style="left:1254px;top:293px;width:1px;height:518px;background:#dee2e6"></div>
<div class="b" style="left:1254px;top:293px;width:1px;height:38px;background:#c0d6cc"></div>
<div class="b" style="left:1350px;top:293px;width:1px;height:518px;background:#dee2e6"></div>
<div class="b" style="left:1350px;top:293px;width:1px;height:38px;background:#c0d6cc"></div>
<div class="b" style="left:1462px;top:293px;width:1px;height:518px;background:#dee2e6"></div>
<div class="b" style="left:1462px;top:293px;width:1px;height:38px;background:#c0d6cc"></div>
<div class="b" style="left:1605px;top:293px;width:1px;height:518px;background:#dee2e6"></div>
<div class="b" style="left:1605px;top:293px;width:1px;height:38px;background:#c0d6cc"></div>
<div class="b" style="left:1749px;top:293px;width:1px;height:518px;background:#dee2e6"></div>
<div class="b" style="left:1749px;top:293px;width:1px;height:38px;background:#c0d6cc"></div>
<div class="b" style="left:313px;top:811px;width:1595px;height:32px;background:#d1e7dd;border:1px solid #6a8fa5"></div>
<div class="b" style="left:1462px;top:811px;width:1px;height:32px;background:#6a8fa5"></div>
<div class="b" style="left:1605px;top:811px;width:1px;height:32px;background:#6a8fa5"></div>
<div class="b" style="left:1749px;top:811px;width:159px;height:32px;background:#52cca6;border:1px solid #6a8fa5"></div>
<div class="b" style="left:313.5px;top:331px;width:16px;height:480px;background:linear-gradient(to right,rgba(0,0,0,.055),rgba(0,0,0,0))"></div>
<span class="t" style="left:332.4px;top:305.9px;font-size:17.5px;font-weight:700;color:#000;">#</span>
<span class="t" style="left:550.1px;top:305.9px;font-size:17.5px;font-weight:700;letter-spacing:0.542px;color:#000;">Description</span>
<span class="t" style="left:916.0px;top:305.9px;font-size:17.5px;font-weight:700;letter-spacing:-0.078px;color:#000;">Cost C</span>
<span class="t" style="left:1069.5px;top:305.9px;font-size:17.5px;font-weight:700;letter-spacing:0.359px;color:#000;">JR No</span>
<span class="t" style="left:1178.5px;top:305.9px;font-size:17.5px;font-weight:700;letter-spacing:1.021px;color:#000;">Date</span>
<span class="t" style="left:1269.5px;top:305.9px;font-size:17.5px;font-weight:700;letter-spacing:0.950px;color:#000;">Doc No</span>
<span class="t" style="left:1367.0px;top:305.9px;font-size:17.5px;font-weight:700;letter-spacing:0.728px;color:#000;">Doc date</span>
<span class="t" style="left:1509.5px;top:305.9px;font-size:17.5px;font-weight:700;letter-spacing:1.312px;color:#000;">Debit</span>
<span class="t" style="left:1650.5px;top:305.9px;font-size:17.5px;font-weight:700;letter-spacing:0.688px;color:#000;">Credit</span>
<span class="t" style="left:1794.5px;top:305.9px;font-size:17.5px;font-weight:700;letter-spacing:0.229px;color:#000;">Balance</span>
<span class="t" style="left:332.2px;top:335.9px;font-size:18.2px;letter-spacing:0.950px;color:#212529;">1</span>
<span class="t" style="left:367.6px;top:335.9px;font-size:18.2px;letter-spacing:0.232px;color:#212529;">previous balance</span>
<span class="t" style="left:940.8px;top:335.9px;font-size:18.2px;letter-spacing:0.950px;color:#212529;">&quot;</span>
<span class="t" style="left:1092.3px;top:335.9px;font-size:18.2px;letter-spacing:0.950px;color:#212529;">&quot;</span>
<span class="t" style="left:1195.8px;top:335.9px;font-size:18.2px;letter-spacing:0.950px;color:#212529;">&quot;</span>
<span class="t" style="left:1403.3px;top:335.9px;font-size:18.2px;letter-spacing:0.950px;color:#212529;">&quot;</span>
<span class="t" style="left:1517.0px;top:335.9px;font-size:18.2px;letter-spacing:-0.469px;color:#212529;">0.00</span>
<span class="t" style="left:1660.5px;top:335.9px;font-size:18.2px;letter-spacing:-0.469px;color:#212529;">0.00</span>
<span class="t" style="left:1811.8px;top:335.9px;font-size:18.2px;letter-spacing:-0.469px;color:#212529;">0.00</span>
<span class="t" style="left:332.2px;top:358.9px;font-size:18.2px;letter-spacing:0.950px;color:#212529;">2</span>
<span class="t" style="left:367.6px;top:358.9px;font-size:18.2px;letter-spacing:0.401px;color:#212529;">Credit note CR-2025-1-0002- To</span>
<span class="t" style="left:367.6px;top:376.7px;font-size:18.2px;letter-spacing:0.396px;color:#212529;">and Energy Management - VAT No:</span>
<span class="t" style="left:916.6px;top:358.9px;font-size:18.2px;letter-spacing:0.809px;color:#212529;">Admin</span>
<span class="t" style="left:1058.3px;top:358.9px;font-size:18.2px;letter-spacing:-0.059px;color:#212529;">JR-2025-</span>
<span class="t" style="left:1066.4px;top:376.7px;font-size:18.2px;letter-spacing:0.312px;color:#212529;">1-0020</span>
<span class="t" style="left:1150.7px;top:358.9px;font-size:18.2px;letter-spacing:0.619px;color:#212529;">05/12/2025</span>
<span class="t" style="left:1262.8px;top:358.9px;font-size:18.2px;letter-spacing:0.094px;color:#212529;">CR-2025-</span>
<span class="t" style="left:1273.4px;top:376.7px;font-size:18.2px;letter-spacing:0.312px;color:#212529;">1-0002</span>
<span class="t" style="left:1358.2px;top:358.9px;font-size:18.2px;letter-spacing:0.619px;color:#212529;">05/12/2025</span>
<span class="t" style="left:1517.0px;top:358.9px;font-size:18.2px;letter-spacing:-0.469px;color:#212529;">0.00</span>
<span class="t" style="left:1643.2px;top:358.9px;font-size:18.2px;letter-spacing:-0.300px;color:#212529;">5,002.50</span>
<span class="t" style="left:1790.5px;top:358.9px;font-size:18.2px;letter-spacing:-0.057px;color:#212529;">-5,002.50</span>
<span class="t" style="left:332.2px;top:399.9px;font-size:18.2px;letter-spacing:0.950px;color:#212529;">3</span>
<span class="t" style="left:367.6px;top:399.9px;font-size:18.2px;letter-spacing:0.503px;color:#212529;">Debit note DB-2025-1-0002- To</span>
<span class="t" style="left:468.6px;top:417.7px;font-size:18.2px;letter-spacing:0.472px;color:#212529;">Management - VAT No:</span>
<span class="t" style="left:916.6px;top:399.9px;font-size:18.2px;letter-spacing:0.809px;color:#212529;">Admin</span>
<span class="t" style="left:1058.3px;top:399.9px;font-size:18.2px;letter-spacing:-0.059px;color:#212529;">JR-2025-</span>
<span class="t" style="left:1066.4px;top:417.7px;font-size:18.2px;letter-spacing:0.312px;color:#212529;">1-0021</span>
<span class="t" style="left:1150.7px;top:399.9px;font-size:18.2px;letter-spacing:0.619px;color:#212529;">05/12/2025</span>
<span class="t" style="left:1262.5px;top:399.9px;font-size:18.2px;letter-spacing:0.308px;color:#212529;">DB-2025-</span>
<span class="t" style="left:1273.4px;top:417.7px;font-size:18.2px;letter-spacing:0.312px;color:#212529;">1-0002</span>
<span class="t" style="left:1358.2px;top:399.9px;font-size:18.2px;letter-spacing:0.619px;color:#212529;">05/12/2025</span>
<span class="t" style="left:1499.7px;top:399.9px;font-size:18.2px;letter-spacing:-0.300px;color:#212529;">3,680.00</span>
<span class="t" style="left:1660.5px;top:399.9px;font-size:18.2px;letter-spacing:-0.469px;color:#212529;">0.00</span>
<span class="t" style="left:1790.5px;top:399.9px;font-size:18.2px;letter-spacing:-0.057px;color:#212529;">-1,322.50</span>
<span class="t" style="left:332.2px;top:440.9px;font-size:18.2px;letter-spacing:0.950px;color:#212529;">4</span>
<span class="t" style="left:367.6px;top:440.9px;font-size:18.2px;letter-spacing:0.318px;color:#212529;">Sales tax invoice INV-2025-1-0001- To</span>
<span class="t" style="left:544.4px;top:458.7px;font-size:18.2px;letter-spacing:0.472px;color:#212529;">Management - VAT No:</span>
<span class="t" style="left:916.6px;top:440.9px;font-size:18.2px;letter-spacing:0.809px;color:#212529;">Admin</span>
<span class="t" style="left:1058.3px;top:440.9px;font-size:18.2px;letter-spacing:-0.059px;color:#212529;">JR-2025-</span>
<span class="t" style="left:1066.4px;top:458.7px;font-size:18.2px;letter-spacing:0.312px;color:#212529;">1-0013</span>
<span class="t" style="left:1150.7px;top:440.9px;font-size:18.2px;letter-spacing:0.619px;color:#212529;">03/12/2025</span>
<span class="t" style="left:1283.8px;top:440.9px;font-size:18.2px;letter-spacing:0.675px;color:#212529;">INV-</span>
<span class="t" style="left:1269.5px;top:458.7px;font-size:18.2px;letter-spacing:0.549px;color:#212529;">2025-1-</span>
<span class="t" style="left:1283.2px;top:476.5px;font-size:18.2px;letter-spacing:-0.656px;color:#212529;">0001</span>
<span class="t" style="left:1358.2px;top:440.9px;font-size:18.2px;letter-spacing:0.619px;color:#212529;">03/12/2025</span>
<span class="t" style="left:1494.4px;top:440.9px;font-size:18.2px;letter-spacing:-0.215px;color:#212529;">38,985.00</span>
<span class="t" style="left:1660.5px;top:440.9px;font-size:18.2px;letter-spacing:-0.469px;color:#212529;">0.00</span>
<span class="t" style="left:1789.2px;top:440.9px;font-size:18.2px;letter-spacing:-0.215px;color:#212529;">37,662.50</span>
<span class="t" style="left:332.2px;top:498.9px;font-size:18.2px;letter-spacing:0.950px;color:#212529;">5</span>
<span class="t" style="left:367.6px;top:498.9px;font-size:18.2px;letter-spacing:0.401px;color:#212529;">Credit note CR-2025-1-0001- To</span>
<span class="t" style="left:367.6px;top:516.7px;font-size:18.2px;letter-spacing:0.396px;color:#212529;">and Energy Management - VAT No:</span>
<span class="t" style="left:916.6px;top:498.9px;font-size:18.2px;letter-spacing:0.809px;color:#212529;">Admin</span>
<span class="t" style="left:1058.3px;top:498.9px;font-size:18.2px;letter-spacing:-0.059px;color:#212529;">JR-2025-</span>
<span class="t" style="left:1066.4px;top:516.7px;font-size:18.2px;letter-spacing:0.312px;color:#212529;">1-0014</span>
<span class="t" style="left:1150.7px;top:498.9px;font-size:18.2px;letter-spacing:0.619px;color:#212529;">03/12/2025</span>
<span class="t" style="left:1262.8px;top:498.9px;font-size:18.2px;letter-spacing:0.094px;color:#212529;">CR-2025-</span>
<span class="t" style="left:1273.4px;top:516.7px;font-size:18.2px;letter-spacing:0.312px;color:#212529;">1-0001</span>
<span class="t" style="left:1358.2px;top:498.9px;font-size:18.2px;letter-spacing:0.619px;color:#212529;">03/12/2025</span>
<span class="t" style="left:1517.0px;top:498.9px;font-size:18.2px;letter-spacing:-0.469px;color:#212529;">0.00</span>
<span class="t" style="left:1643.2px;top:498.9px;font-size:18.2px;letter-spacing:-0.300px;color:#212529;">2,645.00</span>
<span class="t" style="left:1789.2px;top:498.9px;font-size:18.2px;letter-spacing:-0.215px;color:#212529;">35,017.50</span>
<span class="t" style="left:332.2px;top:539.9px;font-size:18.2px;letter-spacing:0.950px;color:#212529;">6</span>
<span class="t" style="left:367.6px;top:539.9px;font-size:18.2px;letter-spacing:0.503px;color:#212529;">Debit note DB-2025-1-0001- To</span>
<span class="t" style="left:468.6px;top:557.7px;font-size:18.2px;letter-spacing:0.472px;color:#212529;">Management - VAT No:</span>
<span class="t" style="left:916.6px;top:539.9px;font-size:18.2px;letter-spacing:0.809px;color:#212529;">Admin</span>
<span class="t" style="left:1058.3px;top:539.9px;font-size:18.2px;letter-spacing:-0.059px;color:#212529;">JR-2025-</span>
<span class="t" style="left:1066.4px;top:557.7px;font-size:18.2px;letter-spacing:0.312px;color:#212529;">1-0015</span>
<span class="t" style="left:1150.7px;top:539.9px;font-size:18.2px;letter-spacing:0.619px;color:#212529;">03/12/2025</span>
<span class="t" style="left:1262.5px;top:539.9px;font-size:18.2px;letter-spacing:0.308px;color:#212529;">DB-2025-</span>
<span class="t" style="left:1273.4px;top:557.7px;font-size:18.2px;letter-spacing:0.312px;color:#212529;">1-0001</span>
<span class="t" style="left:1358.2px;top:539.9px;font-size:18.2px;letter-spacing:0.619px;color:#212529;">03/12/2025</span>
<span class="t" style="left:1499.7px;top:539.9px;font-size:18.2px;letter-spacing:-0.300px;color:#212529;">2,645.00</span>
<span class="t" style="left:1660.5px;top:539.9px;font-size:18.2px;letter-spacing:-0.469px;color:#212529;">0.00</span>
<span class="t" style="left:1789.2px;top:539.9px;font-size:18.2px;letter-spacing:-0.215px;color:#212529;">37,662.50</span>
<span class="t" style="left:332.2px;top:580.9px;font-size:18.2px;letter-spacing:0.950px;color:#212529;">7</span>
<span class="t" style="left:367.6px;top:580.9px;font-size:18.2px;letter-spacing:0.318px;color:#212529;">Sales tax invoice INV-2025-1-0002- To</span>
<span class="t" style="left:544.4px;top:598.7px;font-size:18.2px;letter-spacing:0.472px;color:#212529;">Management - VAT No:</span>
<span class="t" style="left:916.6px;top:580.9px;font-size:18.2px;letter-spacing:0.809px;color:#212529;">Admin</span>
<span class="t" style="left:1058.3px;top:580.9px;font-size:18.2px;letter-spacing:-0.059px;color:#212529;">JR-2025-</span>
<span class="t" style="left:1066.4px;top:598.7px;font-size:18.2px;letter-spacing:0.312px;color:#212529;">1-0016</span>
<span class="t" style="left:1150.7px;top:580.9px;font-size:18.2px;letter-spacing:0.619px;color:#212529;">04/12/2025</span>
<span class="t" style="left:1283.8px;top:580.9px;font-size:18.2px;letter-spacing:0.675px;color:#212529;">INV-</span>
<span class="t" style="left:1269.5px;top:598.7px;font-size:18.2px;letter-spacing:0.549px;color:#212529;">2025-1-</span>
<span class="t" style="left:1283.2px;top:616.5px;font-size:18.2px;letter-spacing:-0.656px;color:#212529;">0002</span>
<span class="t" style="left:1358.2px;top:580.9px;font-size:18.2px;letter-spacing:0.619px;color:#212529;">04/12/2025</span>
<span class="t" style="left:1494.4px;top:580.9px;font-size:18.2px;letter-spacing:-0.215px;color:#212529;">38,985.00</span>
<span class="t" style="left:1660.5px;top:580.9px;font-size:18.2px;letter-spacing:-0.469px;color:#212529;">0.00</span>
<span class="t" style="left:1789.2px;top:580.9px;font-size:18.2px;letter-spacing:-0.215px;color:#212529;">76,647.50</span>
<span class="t" style="left:332.2px;top:639.9px;font-size:18.2px;letter-spacing:0.950px;color:#212529;">8</span>
<span class="t" style="left:367.6px;top:639.9px;font-size:18.2px;letter-spacing:0.318px;color:#212529;">Sales tax invoice INV-2025-1-0003- To</span>
<span class="t" style="left:544.4px;top:657.7px;font-size:18.2px;letter-spacing:0.472px;color:#212529;">Management - VAT No:</span>
<span class="t" style="left:916.6px;top:639.9px;font-size:18.2px;letter-spacing:0.809px;color:#212529;">Admin</span>
<span class="t" style="left:1058.3px;top:639.9px;font-size:18.2px;letter-spacing:-0.059px;color:#212529;">JR-2025-</span>
<span class="t" style="left:1066.4px;top:657.7px;font-size:18.2px;letter-spacing:0.312px;color:#212529;">1-0017</span>
<span class="t" style="left:1150.7px;top:639.9px;font-size:18.2px;letter-spacing:0.619px;color:#212529;">05/12/2025</span>
<span class="t" style="left:1283.8px;top:639.9px;font-size:18.2px;letter-spacing:0.675px;color:#212529;">INV-</span>
<span class="t" style="left:1269.5px;top:657.7px;font-size:18.2px;letter-spacing:0.549px;color:#212529;">2025-1-</span>
<span class="t" style="left:1283.2px;top:675.5px;font-size:18.2px;letter-spacing:-0.656px;color:#212529;">0003</span>
<span class="t" style="left:1358.2px;top:639.9px;font-size:18.2px;letter-spacing:0.619px;color:#212529;">05/12/2025</span>
<span class="t" style="left:1499.7px;top:639.9px;font-size:18.2px;letter-spacing:-0.300px;color:#212529;">2,645.00</span>
<span class="t" style="left:1660.5px;top:639.9px;font-size:18.2px;letter-spacing:-0.469px;color:#212529;">0.00</span>
<span class="t" style="left:1789.2px;top:639.9px;font-size:18.2px;letter-spacing:-0.215px;color:#212529;">79,292.50</span>
<span class="t" style="left:332.2px;top:698.9px;font-size:18.2px;letter-spacing:0.950px;color:#212529;">9</span>
<span class="t" style="left:367.6px;top:698.9px;font-size:18.2px;letter-spacing:0.327px;color:#212529;">Sales tax invoice INV-2025-1-0004- To Enova for</span>
<span class="t" style="left:544.4px;top:716.7px;font-size:18.2px;letter-spacing:0.472px;color:#212529;">Management - VAT No:</span>
<span class="t" style="left:916.6px;top:698.9px;font-size:18.2px;letter-spacing:0.809px;color:#212529;">Admin</span>
<span class="t" style="left:1058.3px;top:698.9px;font-size:18.2px;letter-spacing:-0.059px;color:#212529;">JR-2025-</span>
<span class="t" style="left:1066.4px;top:716.7px;font-size:18.2px;letter-spacing:0.312px;color:#212529;">1-0018</span>
<span class="t" style="left:1150.7px;top:698.9px;font-size:18.2px;letter-spacing:0.619px;color:#212529;">05/12/2025</span>
<span class="t" style="left:1283.8px;top:698.9px;font-size:18.2px;letter-spacing:0.675px;color:#212529;">INV-</span>
<span class="t" style="left:1269.5px;top:716.7px;font-size:18.2px;letter-spacing:0.549px;color:#212529;">2025-1-</span>
<span class="t" style="left:1283.2px;top:734.5px;font-size:18.2px;letter-spacing:-0.656px;color:#212529;">0004</span>
<span class="t" style="left:1358.2px;top:698.9px;font-size:18.2px;letter-spacing:0.619px;color:#212529;">05/12/2025</span>
<span class="t" style="left:1499.7px;top:698.9px;font-size:18.2px;letter-spacing:-0.300px;color:#212529;">2,645.00</span>
<span class="t" style="left:1660.5px;top:698.9px;font-size:18.2px;letter-spacing:-0.469px;color:#212529;">0.00</span>
<span class="t" style="left:1789.2px;top:698.9px;font-size:18.2px;letter-spacing:-0.215px;color:#212529;">81,937.50</span>
<span class="t" style="left:326.7px;top:756.9px;font-size:18.2px;letter-spacing:0.950px;color:#212529;">10</span>
<span class="t" style="left:367.6px;top:756.9px;font-size:18.2px;letter-spacing:0.327px;color:#212529;">Sales tax invoice INV-2025-1-0005- To Enova for</span>
<span class="t" style="left:544.4px;top:774.7px;font-size:18.2px;letter-spacing:0.472px;color:#212529;">Management - VAT No:</span>
<span class="t" style="left:916.6px;top:756.9px;font-size:18.2px;letter-spacing:0.809px;color:#212529;">Admin</span>
<span class="t" style="left:1058.3px;top:756.9px;font-size:18.2px;letter-spacing:-0.059px;color:#212529;">JR-2025-</span>
<span class="t" style="left:1066.4px;top:774.7px;font-size:18.2px;letter-spacing:0.312px;color:#212529;">1-0019</span>
<span class="t" style="left:1150.7px;top:756.9px;font-size:18.2px;letter-spacing:0.619px;color:#212529;">05/12/2025</span>
<span class="t" style="left:1283.8px;top:756.9px;font-size:18.2px;letter-spacing:0.675px;color:#212529;">INV-</span>
<span class="t" style="left:1269.5px;top:774.7px;font-size:18.2px;letter-spacing:0.549px;color:#212529;">2025-1-</span>
<span class="t" style="left:1283.2px;top:792.5px;font-size:18.2px;letter-spacing:-0.656px;color:#212529;">0005</span>
<span class="t" style="left:1358.2px;top:756.9px;font-size:18.2px;letter-spacing:0.619px;color:#212529;">05/12/2025</span>
<span class="t" style="left:1499.7px;top:756.9px;font-size:18.2px;letter-spacing:-0.300px;color:#212529;">3,967.50</span>
<span class="t" style="left:1660.5px;top:756.9px;font-size:18.2px;letter-spacing:-0.469px;color:#212529;">0.00</span>
<span class="t" style="left:1789.2px;top:756.9px;font-size:18.2px;letter-spacing:-0.215px;color:#212529;">85,905.00</span>
<span class="t" style="left:603.7px;top:820.3px;font-size:16.4px;font-weight:700;letter-spacing:-0.035px;color:#212529;">Debit Balance - Only Eighty Five Thousand Nine Hundred Five Saudi riyal</span>
<span class="t" style="left:1496.9px;top:820.3px;font-size:16.4px;font-weight:700;letter-spacing:0.160px;color:#212529;">93,552.50</span>
<span class="t" style="left:1645.0px;top:820.3px;font-size:16.4px;font-weight:700;letter-spacing:0.170px;color:#212529;">7,647.50</span>
<span class="t" style="left:1791.7px;top:820.3px;font-size:16.4px;font-weight:700;letter-spacing:0.160px;color:#212529;">85,905.00</span>
<div class="b" style="left:443px;top:433.6px;width:17px;height:2.4px;overflow:hidden"><span class="t" style="left:0.6px;top:-15.9px;font-size:18.2px;letter-spacing:-.6px;color:#212529">gy</span></div>
<div class="b" style="left:443px;top:573.6px;width:17px;height:2.4px;overflow:hidden"><span class="t" style="left:0.6px;top:-15.9px;font-size:18.2px;letter-spacing:-.6px;color:#212529">gy</span></div>
</main>
<div class="b" style="left:300px;top:4px;width:22px;height:59px;background:linear-gradient(to right,rgba(0,0,0,.17),rgba(0,0,0,.07) 30%,rgba(0,0,0,.02) 60%,rgba(0,0,0,0))"></div>
<div class="b" style="left:300px;top:63px;width:22px;height:834px;background:linear-gradient(to right,rgba(0,0,0,.27),rgba(0,0,0,.11) 25%,rgba(0,0,0,.035) 55%,rgba(0,0,0,0))"></div>
</body></html>
